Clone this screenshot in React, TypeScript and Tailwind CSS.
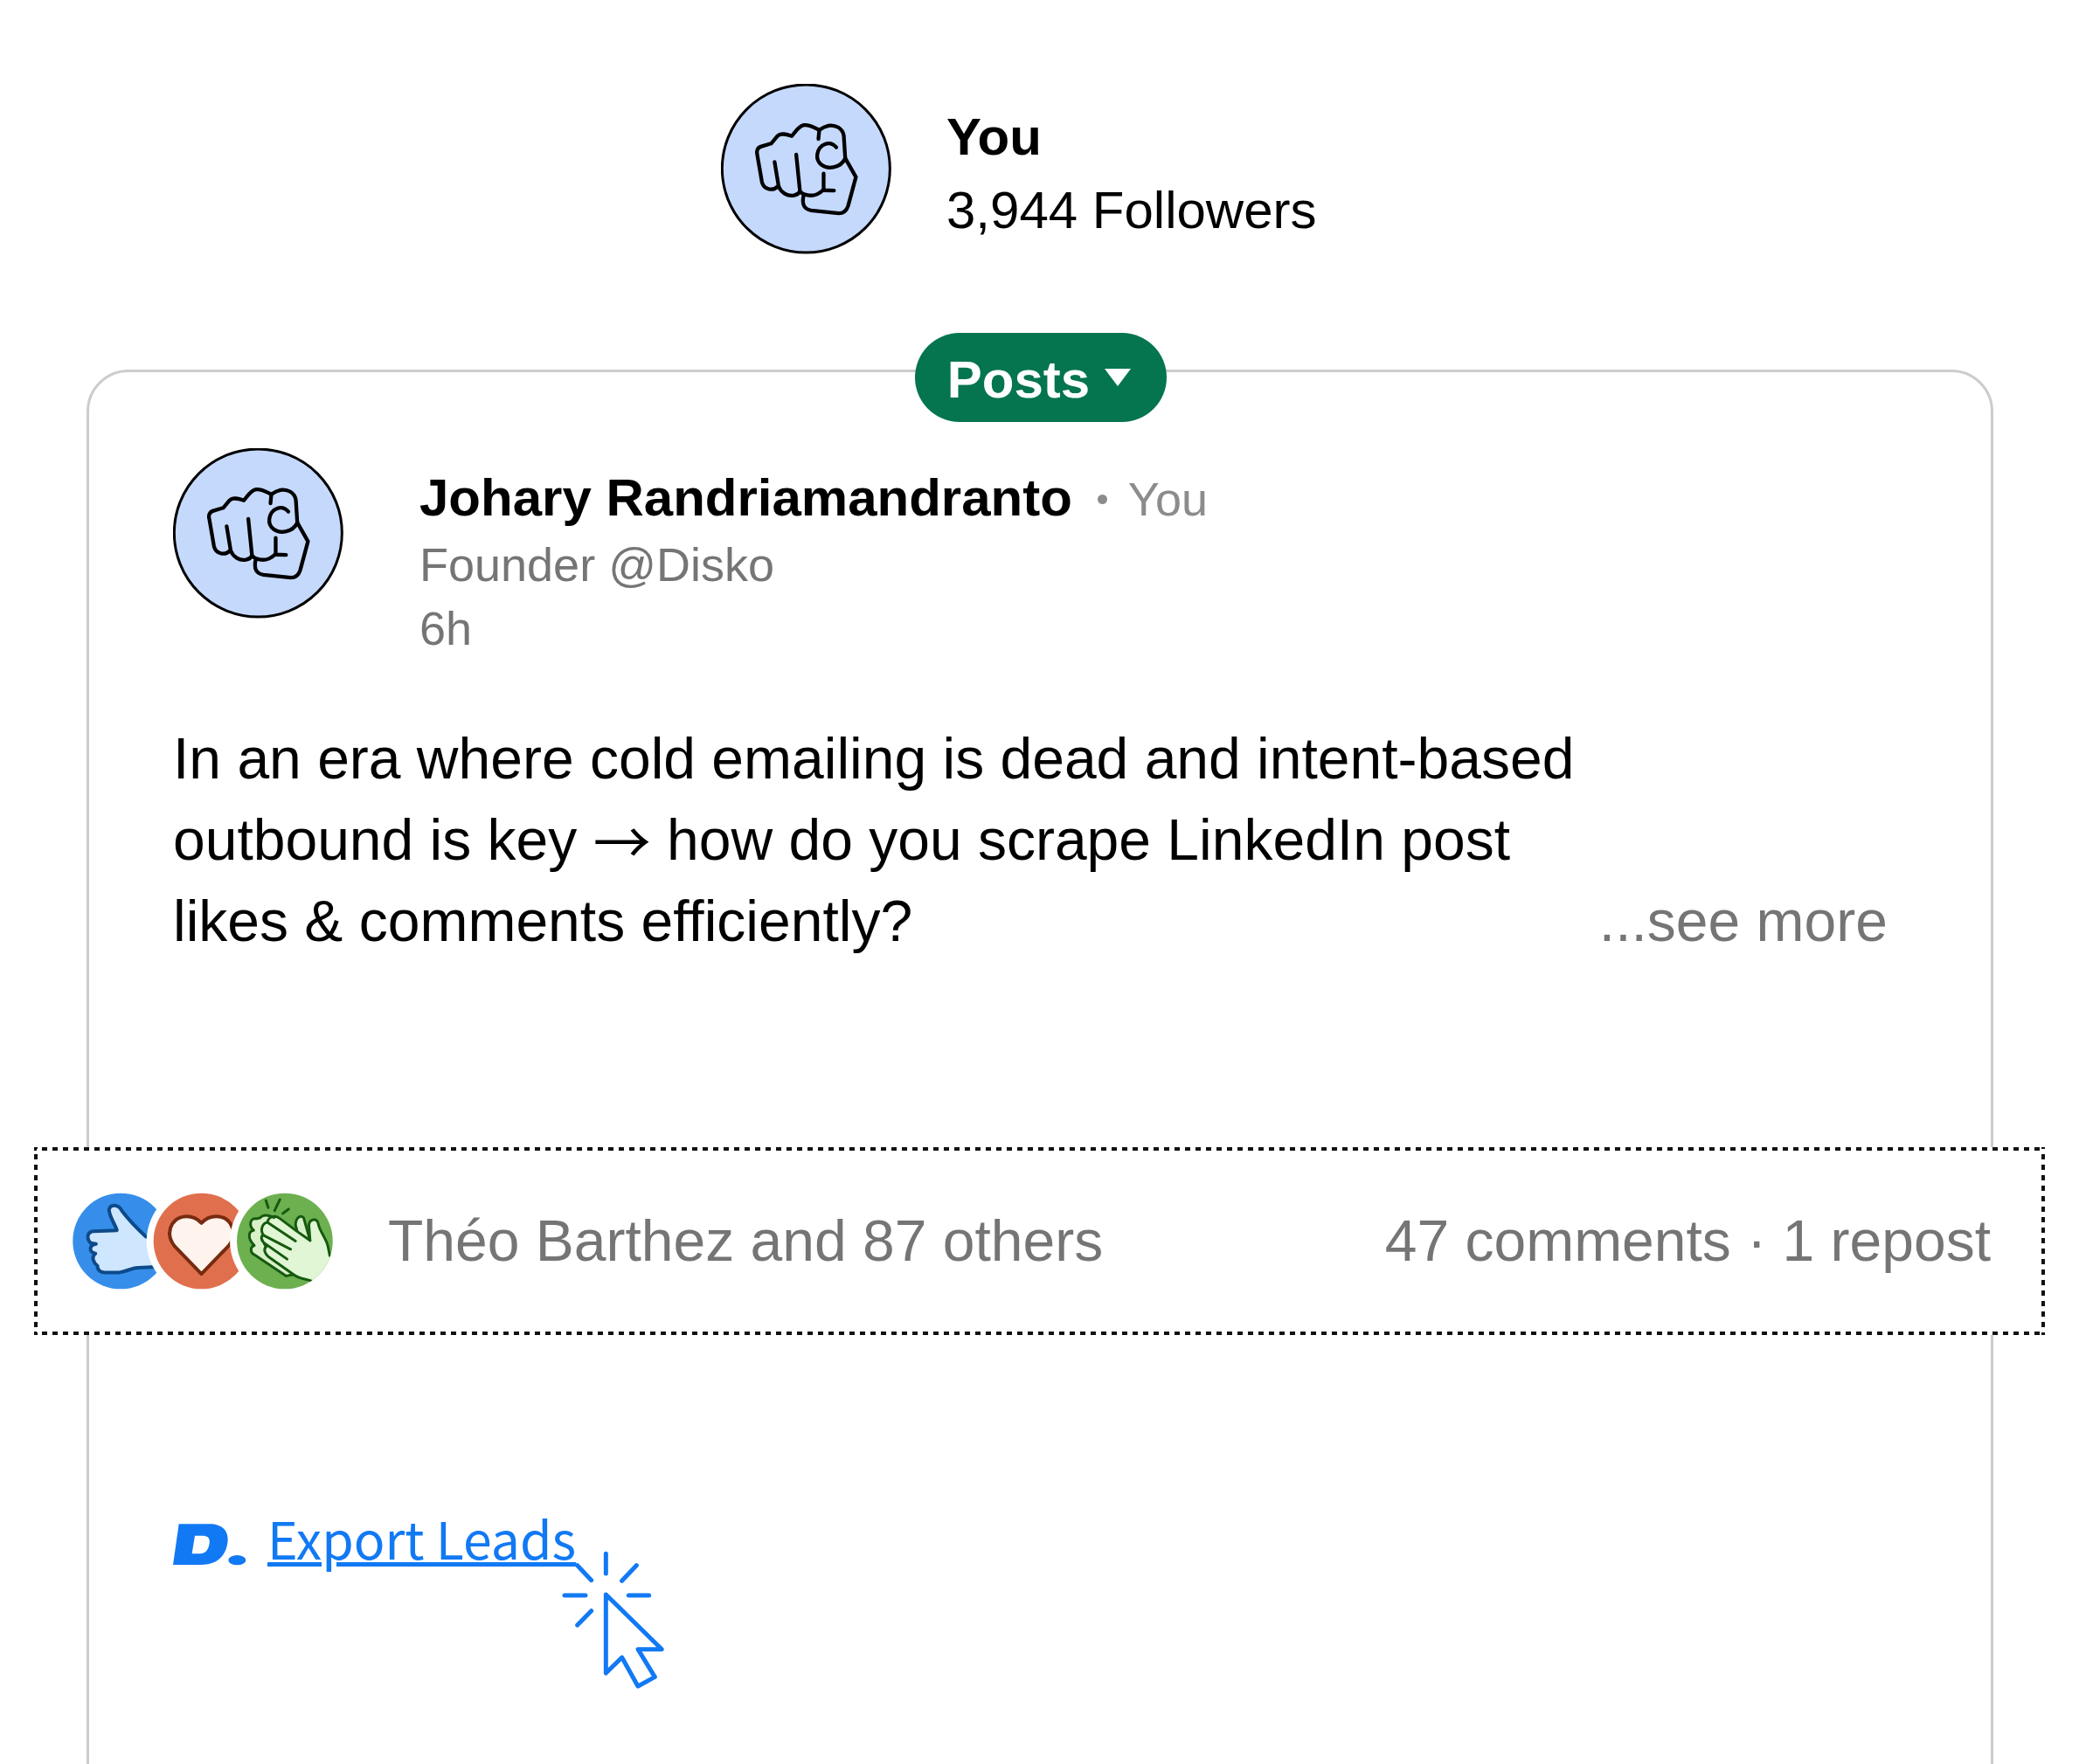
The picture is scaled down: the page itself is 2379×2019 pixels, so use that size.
import React from "react";

function FistAvatar() {
  return (
    <div className="w-[195px] h-[195px] shrink-0">
      <svg viewBox="72 45 591 591" className="w-full h-full">
        <circle cx="367" cy="339" r="291" fill="#c5d9fd" stroke="#000" strokeWidth="9" />
        <g fill="none" stroke="#000" strokeWidth="13" strokeLinecap="round" strokeLinejoin="round">
          <path d="M358 435 C352 465 362 480 385 484 L480 494 C498 494 508 484 513 468 L540 368 L503 303 L498 225 C494 198 468 186 445 190 C430 193 420 200 413 205 C398 198 380 186 360 188 C340 192 330 212 318 226 C300 220 280 214 268 226 L246 252 L212 262 C198 266 194 278 198 292 L214 385 C220 410 250 420 270 400" />
          <path d="M258 316 L272 400 C280 422 302 436 325 432 C335 430 342 425 346 418 C358 432 385 436 405 428 C415 424 422 418 428 412" />
          <path d="M333 290 L346 418" />
          <path d="M428 356 L428 414 L464 415" />
          <path d="M413 205 L410 236" />
          <path d="M472 265 C450 240 412 252 406 290 C402 322 432 340 462 334 C482 330 496 320 503 303" />
        </g>
      </svg>
    </div>
  );
}

function Reactions() {
  return (
    <svg viewBox="155 195 905 340" className="w-[302px] h-[113px] shrink-0">
      <defs>
        <clipPath id="green">
          <circle cx="890" cy="365" r="165" />
        </clipPath>
      </defs>
      <circle cx="325" cy="365" r="165" fill="#368eea" />
      <path
        d="M480 352 L412 350 C385 325 355 295 330 262 C318 238 290 236 285 256 C285 280 305 305 312 328 L232 331 C210 332 205 355 222 372 L240 375 C215 380 215 402 238 408 C222 420 232 440 245 450 C245 465 255 473 270 473 L320 473 C345 470 360 458 385 457 L480 452 Z"
        fill="#cfe6ff"
        stroke="#0c4a8a"
        strokeWidth="12"
        strokeLinejoin="round"
      />
      <circle cx="603" cy="365" r="189" fill="#fff" />
      <circle cx="603" cy="365" r="165" fill="#e0704d" />
      <path
        d="M603 303 C575 272 525 272 503 305 C485 335 495 362 510 382 L603 478 L696 382 C712 362 722 335 703 305 C681 272 631 272 603 303 Z"
        fill="#fff3ee"
        stroke="#772a0f"
        strokeWidth="12"
        strokeLinejoin="round"
      />
      <circle cx="890" cy="365" r="189" fill="#fff" />
      <circle cx="890" cy="365" r="165" fill="#6db050" />
      <g clipPath="url(#green)">
        <g transform="translate(705 180)" stroke="#155a0e" strokeWidth="9" strokeLinecap="round" strokeLinejoin="round">
          <path d="M128 70 L120 45 M150 80 L168 42 M178 90 L198 75" fill="none" />
          <path d="M222 130 C222 105 240 92 250 105 L272 183 L230 160 Z" fill="#d9f0c9" />
          <path
            d="M100 105 C110 92 130 95 150 105 L215 300 L190 305 L80 232 C65 225 65 205 80 200 C55 175 60 150 78 148 C58 130 68 105 85 108 Z"
            fill="#d9f0c9"
          />
          <path
            d="M165 100 L225 150 L270 185 L270 125 C275 105 295 105 300 120 C305 150 325 170 335 200 L345 235 L360 300 L275 330 L215 300 L130 240 L105 200 L105 130 Z"
            fill="#e0f6d5"
            stroke="none"
          />
          <path d="M272 183 L268 128 C272 108 296 105 300 125 C306 155 328 175 334 205 L340 235" fill="none" />
          <path d="M125 120 C130 100 150 95 165 105 L225 150 L272 183" fill="none" />
          <path d="M222 185 L125 120 C105 125 100 150 112 165 L205 213" fill="none" />
          <path d="M193 247 L112 190 C100 175 105 165 112 165 M112 190 L120 205" fill="none" />
          <path d="M120 205 C110 215 118 230 130 240 L215 300 C235 315 255 315 275 322" fill="none" />
        </g>
      </g>
    </svg>
  );
}

function DiskoLogo() {
  return (
    <svg viewBox="25 70 252 142" className="w-[84px] h-[48px] shrink-0">
      <path
        fillRule="evenodd"
        d="M45 70 L150 70 C195 70 218 95 212 135 C205 185 170 210 120 210 L25 210 Z M100 110 L90 172 L118 172 C138 172 148 155 150 135 C152 118 145 110 125 110 Z"
        fill="#1279f4"
      />
      <ellipse cx="245" cy="194" rx="30" ry="17" fill="#1279f4" />
    </svg>
  );
}

function ClickCursor() {
  return (
    <svg
      viewBox="0 0 420 540"
      className="absolute left-[528px] top-[28px] w-[140px] h-[180px]"
      fill="none"
      stroke="#1279f4"
      strokeWidth="15"
      strokeLinecap="round"
      strokeLinejoin="round"
    >
      <path d="M190 192 L382 380 L300 380 L358 475 L300 507 L245 408 L190 462 Z" />
      <path d="M190 52 L190 120 M295 92 L245 145 M268 195 L338 195 M48 195 L120 195 M140 248 L92 297 M140 143 L92 92" />
    </svg>
  );
}

export default function App() {
  return (
    <div className="w-[2379px] h-[2019px] overflow-hidden bg-white text-black font-['Liberation_Sans',Arial,sans-serif]">
      <div className="flex items-center pl-[825px] pt-[96px]">
        <FistAvatar />
        <div className="ml-[63px] pt-[10px]">
          <div className="text-[60px] leading-[84px] font-bold">You</div>
          <div className="text-[60px] leading-[84px]">3,944 Followers</div>
        </div>
      </div>

      <div className="relative ml-[99px] mt-[132px] w-[2182px] h-[1800px] border-[3px] border-[#cccccc] rounded-[48px]">
        <div className="absolute left-[945px] top-[-45px] w-[288px] h-[102px] rounded-full bg-[#04754e] text-white flex items-center justify-center gap-[17px] pr-[4px]">
          <span className="text-[60px] font-bold pt-[6px]">Posts</span>
          <span className="w-0 h-0 border-x-[15px] border-x-transparent border-t-[20px] border-t-white" />
        </div>

        <div className="flex pl-[96px] pt-[87px]">
          <FistAvatar />
          <div className="ml-[87px] pt-[21px]">
            <div className="flex items-baseline">
              <span className="text-[60px] leading-[72px] font-bold">Johary Randriamandranto</span>
              <span className="ml-[29px] w-[11px] h-[11px] rounded-full bg-[#8c8c8c] -translate-y-[13px]" />
              <span className="ml-[24px] text-[54px] leading-[72px] text-[#8c8c8c]">You</span>
            </div>
            <div className="text-[54px] leading-[72px] text-[#757575] pt-[3px]">Founder @Disko</div>
            <div className="text-[54px] leading-[72px] text-[#757575] pt-[1px]">6h</div>
          </div>
        </div>

        <div className="pl-[96px] pr-[118px] pt-[67px] text-[66px] leading-[93px]">
          <div>In an era where cold emailing is dead and intent-based</div>
          <div>
            outbound is key{" "}
            <span className="relative top-[5px] leading-[0] font-['Noto_Sans_CJK_JP',sans-serif]">→</span> how do you
            scrape LinkedIn post
          </div>
          <div className="flex justify-between">
            <span>likes &amp; comments efficiently?</span>
            <span className="text-[#757575]">...see more</span>
          </div>
        </div>

        <div className="relative ml-[-63px] mt-[212px] w-[2301px] h-[215px] flex items-center pl-[42px] pr-[62px] text-[66px] text-[#757575] bg-white bg-[linear-gradient(90deg,#111_50%,transparent_50%),linear-gradient(90deg,#111_50%,transparent_50%),linear-gradient(#111_50%,transparent_50%),linear-gradient(#111_50%,transparent_50%)] bg-[size:12px_4px,12px_4px,4px_12px,4px_12px] bg-[position:-3px_0,-3px_100%,0_-4px,100%_-4px] [background-repeat:repeat-x,repeat-x,repeat-y,repeat-y]">
          <Reactions />
          <span className="ml-[61px]">Théo Barthez and 87 others</span>
          <span className="ml-auto">47 comments · 1 repost</span>
        </div>

        <div className="relative flex items-center pl-[96px] mt-[205px] h-[70px]">
          <DiskoLogo />
          <a className="ml-[24px] pb-[16px] text-[59px] leading-[70px] text-[#1279f4] underline font-['Noto_Sans_CJK_JP',sans-serif] whitespace-nowrap">
            Export Leads
          </a>
          <ClickCursor />
        </div>
      </div>
    </div>
  );
}
